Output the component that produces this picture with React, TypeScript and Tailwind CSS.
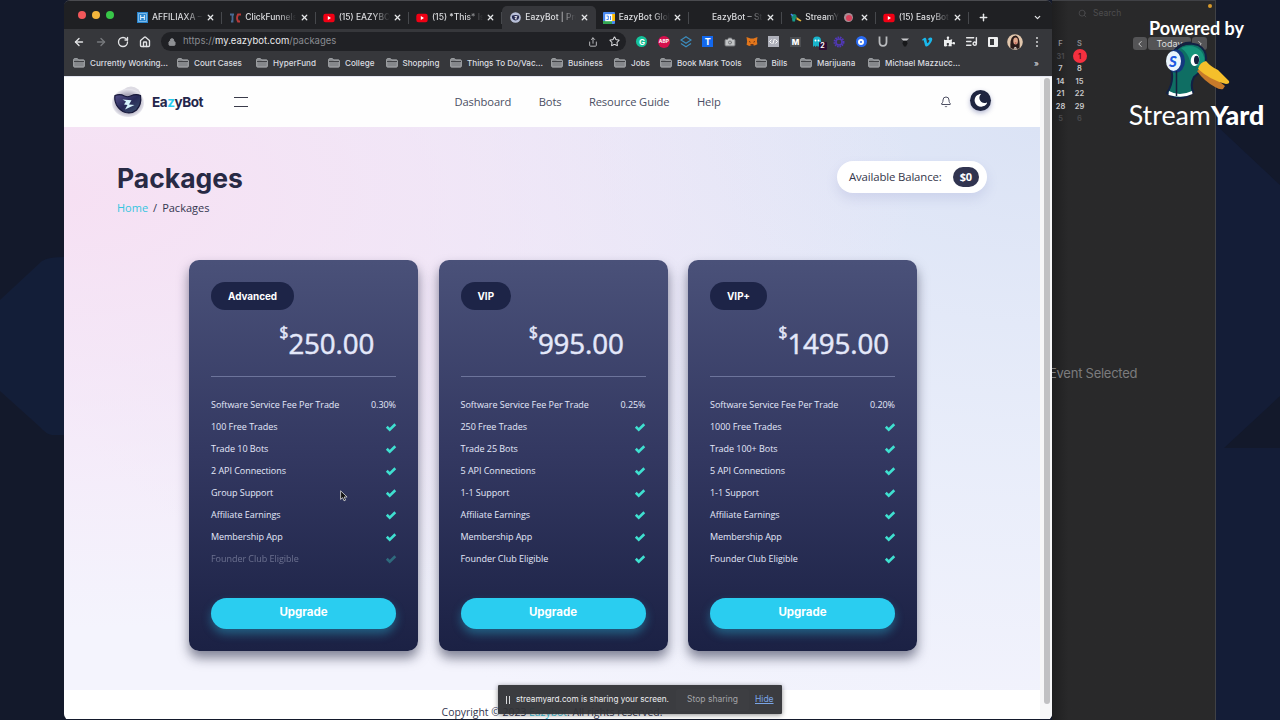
import type { ReactNode } from "react";
import {
  ArrowLeft,
  ArrowRight,
  Bell,
  Camera,
  ChevronDown,
  ChevronLeft,
  ChevronRight,
  House,
  ListMusic,
  Lock,
  Plus,
  RotateCw,
  Search,
  Share,
  Star,
  X,
} from "lucide-react";
import { FaMoon, FaPuzzlePiece, FaVimeoV } from "react-icons/fa";

interface Tab {
  title: string;
  icon?: ReactNode;
  active?: boolean;
  recording?: boolean;
}

interface Bookmark {
  label: string;
  width: string;
}

interface Plan {
  name: string;
  price: string;
  fee: string;
  features: string[];
  lastDisabled?: boolean;
}

function YouTubeIcon() {
  return (
    <svg viewBox="0 0 12 10" className="h-[10px] w-3">
      <rect x="0.3" y="0.8" width="11.4" height="8.4" rx="2.2" fill="#f00014" />
      <path d="M4.8 3.1v3.8L8 5z" fill="#fff" />
    </svg>
  );
}

function BotIcon() {
  return (
    <svg viewBox="0 0 12 12" className="size-[11px]">
      <circle cx="6" cy="6" r="5.8" fill="#b9c0d8" />
      <path d="M2 4.2q4-1.6 8 0q.3 4.8-4 5q-4.2-.3-4-5z" fill="#262a50" />
      <path d="M5 5h2.5L5.5 7.5h2" stroke="#fff" fill="none" />
    </svg>
  );
}

function FolderIcon() {
  return (
    <svg viewBox="0 0 12 10" className="h-[10px] w-3 shrink-0">
      <path
        d="M.7 8.3V1.5q0-.8.8-.8h3l1 1.2h5q.8 0 .8.8v5.6q0 .8-.8.8h-9q-.8 0-.8-.8z"
        fill="#85878b"
        stroke="#b6b8bb"
        strokeWidth="0.9"
      />
      <path d="M1 3.5h10" stroke="#3a3b40" strokeWidth="0.9" />
    </svg>
  );
}

function CheckIcon() {
  return (
    <svg viewBox="0 0 12 10" className="mt-px -mr-[0.5px] h-[10px] w-3" fill="none">
      <path d="M1.8 4.8l2.9 2.8 5.6-5.4" stroke="#3fe0d0" strokeWidth="2.6" />
    </svg>
  );
}

const tabs: Tab[] = [
  {
    title: "AFFILIAXA – D",
    icon: (
      <svg viewBox="0 0 11 11" className="size-[11px]">
        <rect width="11" height="11" fill="#2a86cf" />
        <path d="M1.5 1.5h8v8h-8z" stroke="#9fcdf0" fill="none" strokeWidth="0.7" />
        <path d="M3.7 3v5M7.3 3v5M3.7 5.5h3.6" stroke="#e6f2fb" fill="none" />
      </svg>
    ),
  },
  {
    title: "ClickFunnels",
    icon: (
      <svg viewBox="0 0 11 10" className="h-[10px] w-[11px]">
        <path d="M0 1.5h4M2.5 1.5v7H1" stroke="#4a6a92" strokeWidth="1.8" fill="none" />
        <path d="M11 1.5H8q-2 3.5 0 7h2" stroke="#b93a3a" strokeWidth="1.8" fill="none" />
      </svg>
    ),
  },
  { title: "(15) EAZYBOT", icon: <YouTubeIcon /> },
  { title: "(15) *This* Is", icon: <YouTubeIcon /> },
  { title: "EazyBot | Pro", icon: <BotIcon />, active: true },
  {
    title: "EazyBot Glob",
    icon: (
      <svg viewBox="0 0 12 12" className="size-[12px]">
        <rect width="12" height="12" rx="1" fill="#4a8af0" />
        <path d="M0 9h9v3H1q-1 0-1-1z" fill="#34a853" />
        <path d="M9 2h3v7H9z" fill="#fbbc04" />
        <rect x="2.2" y="2.2" width="7" height="7" fill="#fff" />
        <path d="M3.5 4h1.8v3.5H3.5M7.5 4v4" stroke="#4285f4" fill="none" />
      </svg>
    ),
  },
  { title: "EazyBot – Sta" },
  {
    title: "StreamYard",
    recording: true,
    icon: (
      <svg viewBox="0 0 12 10" className="h-[10px] w-3">
        <circle cx="4" cy="3.5" r="2.6" fill="#128a72" />
        <path d="M2 5.5h3.5l-.5 3H2.5z" fill="#149a8c" />
        <path d="M6.5 4l5 3.5-1 1-4-2z" fill="#e5b63a" />
        <path d="M1 1l2 2" stroke="#4b86f0" strokeWidth="1.5" />
      </svg>
    ),
  },
  { title: "(15) EasyBot", icon: <YouTubeIcon /> },
];

const bookmarks: Bookmark[] = [
  { label: "Currently Working...", width: "w-[104px]" },
  { label: "Court Cases", width: "w-[79px]" },
  { label: "HyperFund", width: "w-[72px]" },
  { label: "College", width: "w-[57.5px]" },
  { label: "Shopping", width: "w-[64.5px]" },
  { label: "Things To Do/Vac...", width: "w-[101px]" },
  { label: "Business", width: "w-[63px]" },
  { label: "Jobs", width: "w-[46px]" },
  { label: "Book Mark Tools", width: "w-[94.5px]" },
  { label: "Bills", width: "w-[45.5px]" },
  { label: "Marijuana", width: "w-[68px]" },
  { label: "Michael Mazzucc...", width: "w-[90px]" },
];

const plans: Plan[] = [
  {
    name: "Advanced",
    price: "250.00",
    fee: "0.30%",
    features: [
      "100 Free Trades",
      "Trade 10 Bots",
      "2 API Connections",
      "Group Support",
      "Affiliate Earnings",
      "Membership App",
      "Founder Club Eligible",
    ],
    lastDisabled: true,
  },
  {
    name: "VIP",
    price: "995.00",
    fee: "0.25%",
    features: [
      "250 Free Trades",
      "Trade 25 Bots",
      "5 API Connections",
      "1-1 Support",
      "Affiliate Earnings",
      "Membership App",
      "Founder Club Eligible",
    ],
  },
  {
    name: "VIP+",
    price: "1495.00",
    fee: "0.20%",
    features: [
      "1000 Free Trades",
      "Trade 100+ Bots",
      "5 API Connections",
      "1-1 Support",
      "Affiliate Earnings",
      "Membership App",
      "Founder Club Eligible",
    ],
  },
];

const calendarRows = [
  ["31", "1"],
  ["7", "8"],
  ["14", "15"],
  ["21", "22"],
  ["28", "29"],
  ["5", "6"],
];

function TabStrip() {
  return (
    <div className="flex h-[28px] bg-[#1f2023] pt-[5px]">
      <div className="flex w-[65px] shrink-0 items-center gap-[6px] pb-[5px] pl-[14px]">
        <span className="size-2 rounded-full bg-[#f2575a]" />
        <span className="size-2 rounded-full bg-[#f3b53c]" />
        <span className="size-2 rounded-full bg-[#38c648]" />
      </div>
      {tabs.map((tab) => (
        <div
          key={tab.title}
          className={`flex w-[93.33px] shrink-0 items-center rounded-t-[5px] pr-[7px] pl-[7.5px] ${
            tab.active ? "bg-[#36373b]" : ""
          }`}
        >
          <span className="flex w-[15.5px] shrink-0">{tab.icon}</span>
          <span
            className={`overflow-hidden text-[8.5px] font-medium whitespace-nowrap text-[#dcdde0] [mask-image:linear-gradient(to_right,black_65%,transparent)] ${
              tab.recording ? "w-[34px]" : "w-[51px]"
            }`}
          >
            {tab.title}
          </span>
          {tab.recording && (
            <span className="ml-[5px] flex size-[9px] shrink-0 items-center justify-center rounded-full bg-[#a98d94]">
              <span className="size-[6px] rounded-full bg-[#d9405a]" />
            </span>
          )}
          <X className="ml-auto size-[9px] shrink-0 text-[#e6e7e9]" strokeWidth={3.4} />
          {!tab.active && <span className="relative left-[7px] -ml-px h-3 w-px shrink-0 bg-[#46484c]" />}
        </div>
      ))}
      <Plus className="mt-[6px] ml-[9px] size-[11px] text-[#e6e7e9]" strokeWidth={3.2} />
      <ChevronDown className="mt-[7px] mr-[10px] ml-auto size-[9px] text-[#e6e7e9]" strokeWidth={3.2} />
    </div>
  );
}

function Extensions() {
  return (
    <div className="flex h-5 items-center">
      <div className="flex w-[21.95px] justify-center">
        <span className="flex size-[11px] items-center justify-center rounded-full bg-[#15c39a] text-[8px] font-bold text-white">
          G
        </span>
      </div>
      <div className="flex w-[21.95px] justify-center">
        <span className="flex size-[12px] items-center justify-center rounded-full bg-[#d6104c] text-[5px] font-bold text-white">
          ABP
        </span>
      </div>
      <div className="flex w-[21.95px] justify-center">
        <svg viewBox="0 0 12 12" className="size-3" fill="none" stroke="#3c8dbe" strokeWidth="1.2">
          <path d="M6 .8l5 3.2-5 3.2-5-3.2zM1 7.6l5 3.2 5-3.2" />
        </svg>
      </div>
      <div className="flex w-[21.95px] justify-center">
        <span className="flex size-[11px] items-center justify-center bg-[#1268ee] text-[9px] font-bold text-white">
          T
        </span>
      </div>
      <div className="flex w-[21.95px] justify-center">
        <Camera className="size-[12px] fill-[#c2c4c6] text-[#75777b]" strokeWidth={2} />
      </div>
      <div className="flex w-[21.95px] justify-center">
        <svg viewBox="0 0 12 11" className="h-[11px] w-3">
          <path d="M.5 1l4 1.5h3l4-1.5-.6 4 .5 3.2-2.6 1.3L6 9l-2.8 1L.6 8.7l.5-3.2z" fill="#e2761b" />
          <path d="M3 5.5l1.5.7M9 5.5l-1.5.7M4.5 8.5h3" stroke="#6b3417" />
        </svg>
      </div>
      <div className="flex w-[21.95px] justify-center">
        <svg viewBox="0 0 11 11" className="size-[11px]">
          <rect width="11" height="11" fill="#aeb0ba" />
          <path d="M3.5 3.5l-2 2 2 2M7.5 3.5l2 2-2 2M6.3 3l-1.5 5" stroke="#fff" fill="none" />
        </svg>
      </div>
      <div className="flex w-[21.95px] justify-center">
        <span className="flex h-[10px] w-[11px] items-center justify-center bg-[#4b4d51] text-[8px] leading-none font-extrabold text-white">
          M
        </span>
      </div>
      <div className="relative flex w-[21.95px] justify-center">
        <svg viewBox="0 0 10 11" className="h-[11px] w-[10px]">
          <path d="M1 11V4.5Q1 .5 5 .5t4 4V11L7.5 9.5 6 11 5 9.5 3.5 11 2.5 9.5z" fill="#18b4cc" />
          <circle cx="3.5" cy="4.5" r="1" fill="#fff" />
          <circle cx="6.5" cy="4.5" r="1" fill="#fff" />
        </svg>
        <span className="absolute top-[6px] left-[12px] flex h-[8px] w-[8px] items-center justify-center rounded-[1px] bg-[#2d0b33] text-[7px] font-bold text-white">
          2
        </span>
      </div>
      <div className="flex w-[21.95px] justify-center">
        <svg viewBox="0 0 12 12" className="size-3" fill="none" stroke="#5138b8">
          <circle cx="6" cy="6" r="4.5" strokeWidth="2" strokeDasharray="1.6 .8" />
          <circle cx="6" cy="6" r="3" strokeWidth="1.5" />
        </svg>
      </div>
      <div className="flex w-[21.95px] justify-center">
        <span className="flex size-[11px] items-center justify-center rounded-full bg-[#2a6bf2]">
          <span className="size-[6px] rounded-full border-2 border-white" />
        </span>
      </div>
      <div className="flex w-[21.95px] justify-center">
        <svg viewBox="0 0 10 11" className="h-[11px] w-[10px]" fill="none" stroke="#b9bbbe" strokeWidth="1.8">
          <path d="M1.5.5V6q0 3.800 3.500 3.800T8.500 6V.5" />
        </svg>
      </div>
      <div className="flex w-[21.95px] justify-center">
        <svg viewBox="0 0 10 12" className="h-3 w-[10px]">
          <path d="M1 2.500h8L6.800 4.500H3.200z" fill="#c9cacc" />
          <path d="M3 5h4l.5 2.500L6 10.500H4L2.500 7.500z" fill="#17181a" />
        </svg>
      </div>
      <div className="flex w-[21.95px] justify-center">
        <FaVimeoV className="size-[12px] text-[#1ab7ea]" />
      </div>
      <div className="flex w-[21.95px] justify-center">
        <FaPuzzlePiece className="size-[11px] text-[#eeeff0]" />
      </div>
      <div className="flex w-[21.95px] justify-center">
        <ListMusic className="size-[13px] text-[#e6e7e9]" strokeWidth={2.6} />
      </div>
      <div className="flex w-[21.95px] justify-center">
        <span className="size-[10px] rounded-[1px] border-2 border-r-4 border-[#eeeff0]" />
      </div>
      <div className="flex w-[21.95px] justify-center">
        <svg viewBox="0 0 16 16" className="size-4">
          <circle cx="8" cy="8" r="7.8" fill="#e2c7ad" />
          <path d="M3.5 14Q2.5 2 8.5 1.5 13.5 2.5 12.5 14l-2 1H6z" fill="#2a1a19" />
          <ellipse cx="8.6" cy="7" rx="2.3" ry="3.5" fill="#e0a78b" />
          <path d="M6.5 14.8l1.5-2 2.5 1.8z" fill="#e9dfd9" />
          <path d="M7.8 9h1.6" stroke="#b3303b" />
        </svg>
      </div>
      <div className="flex w-[21.95px] flex-col items-center gap-[2px]">
        <span className="size-[2px] rounded-full bg-[#d6d7d9]" />
        <span className="size-[2px] rounded-full bg-[#d6d7d9]" />
        <span className="size-[2px] rounded-full bg-[#d6d7d9]" />
      </div>
    </div>
  );
}

function BrowserToolbar() {
  return (
    <div className="flex h-[26px] items-center bg-[#36373b] pb-px pl-[9px]">
      <div className="flex w-[88px] gap-[10px] text-[#e2e3e5]">
        <ArrowLeft className="size-3" strokeWidth={2.7} />
        <ArrowRight className="size-3 text-[#77797d]" strokeWidth={2.7} />
        <RotateCw className="size-3" strokeWidth={2.7} />
        <House className="size-3" strokeWidth={2.7} />
      </div>
      <div className="flex h-[19px] w-[465px] items-center rounded-full bg-[#202125] pr-[6px] pl-[7px]">
        <Lock className="size-[8px] fill-[#8f9195] text-[#8f9195]" strokeWidth={3} />
        <span className="ml-[7px] text-[9.5px] text-[#8a8c91]">
          https://<span className="text-[#e9eaec]">my.eazybot.com</span>/packages
        </span>
        <Share className="ml-auto size-[10px] text-[#c3c4c7]" strokeWidth={2.2} />
        <Star className="ml-[11px] size-[11px] text-[#dcdde0]" strokeWidth={2.2} />
      </div>
      <div className="ml-[5px]">
        <Extensions />
      </div>
    </div>
  );
}

function BookmarkBar() {
  return (
    <div className="flex h-[21px] items-center bg-[#36373b] pb-[5px] pl-[9px] text-[8.1px] font-medium text-[#dcdde0]">
      {bookmarks.map((bookmark) => (
        <div
          key={bookmark.label}
          className={`flex shrink-0 items-center gap-[5px] whitespace-nowrap ${bookmark.width}`}
        >
          <FolderIcon />
          {bookmark.label}
        </div>
      ))}
      <span className="mr-[13px] ml-auto">»</span>
    </div>
  );
}

function SiteHeader() {
  return (
    <header className="flex h-[50px] shrink-0 items-center bg-[#fefefe] pl-[47px]">
      <svg viewBox="0 0 34 34" className="size-[34px]">
        <defs>
          <radialGradient id="halo">
            <stop offset="0.6" stopColor="#a9a6b8" />
            <stop offset="1" stopColor="#e8e7ee" />
          </radialGradient>
          <linearGradient id="mask" x1="0" y1="0" x2="1" y2="1">
            <stop offset="0" stopColor="#55508a" />
            <stop offset="0.5" stopColor="#272a57" />
            <stop offset="1" stopColor="#3c5570" />
          </linearGradient>
        </defs>
        <ellipse cx="20" cy="11" rx="10" ry="9.5" fill="#dddbe3" />
        <ellipse cx="17" cy="18" rx="16" ry="14" fill="url(#halo)" />
        <path
          d="M4 10.5Q9 8.5 13.5 11q3 1.5 6 0Q25 8.5 29.5 10.5 31 19 25.5 25q-4.5 4-11 2.5Q9 26 5.5 20 3 14.5 4 10.5z"
          fill="url(#mask)"
          stroke="#17183a"
          strokeWidth="1.2"
        />
        <path d="M11.5 14.5l9 .8-2.5 4.2 5.500.5-9.500 4.500 2.500-4.500-3.500-.5 2-3z" fill="#d5f2fb" />
      </svg>
      <span className="ml-[7px] w-[52px] font-[Inter,sans-serif] text-[13.5px] font-bold tracking-[-0.45px] text-[#24264b]">
        Ea<span className="text-[#29cdee]">z</span>yBot
      </span>
      <div className="ml-[30px] flex w-[14px] flex-col gap-2">
        <span className="h-px bg-[#3a3b4a]" />
        <span className="h-px bg-[#3a3b4a]" />
      </div>
      <nav className="ml-[206.5px] flex gap-[27.4px] text-[11.2px] tracking-[-0.11px] text-[#4b4e63]">
        <span>Dashboard</span>
        <span>Bots</span>
        <span>Resource Guide</span>
        <span>Help</span>
      </nav>
      <Bell className="ml-auto size-3 text-[#44475b]" strokeWidth={1.9} />
      <span className="mr-[49px] mb-[3px] ml-[18px] flex size-[21px] items-center justify-center rounded-full bg-[#1f2540] shadow-[0_2px_5px_rgba(60,70,140,0.4)]">
        <FaMoon className="size-[13px] -rotate-[15deg] text-white" />
      </span>
    </header>
  );
}

function PlanCard({ plan }: { plan: Plan }) {
  return (
    <article className="flex h-[391px] w-[229px] flex-col rounded-[10px] bg-linear-to-b from-[#4a5179] via-[#333861] to-[#1b2144] px-[22px] pt-[22px] text-[#e4e8fa] shadow-[0_7px_12px_rgba(35,38,65,0.55)]">
      <span className="flex h-[28px] items-center self-start rounded-full bg-[#1d2447] px-[17px] font-[Inter,sans-serif] text-[9.9px] font-bold text-white">
        {plan.name}
      </span>
      <div className="mt-[11px] flex h-[44px] items-start pl-[68.5px] [-webkit-text-stroke:0.5px_#e4e8fa]">
        <span className="mt-px text-[15.5px] leading-[20px]">$</span>
        <span className="text-[27.7px] leading-[44px] tracking-[-0.1px]">{plan.price}</span>
      </div>
      <div className="mt-[11px] h-px bg-[#6d749b]" />
      <ul className="mt-[17px] text-[9px] tracking-[-0.04px]">
        <li className="flex h-[21.95px] items-center justify-between">
          <span>Software Service Fee Per Trade</span>
          <span>{plan.fee}</span>
        </li>
        {plan.features.map((feature, index) => (
          <li
            key={feature}
            className={`flex h-[21.95px] items-center justify-between ${
              plan.lastDisabled && index === plan.features.length - 1 ? "opacity-35" : ""
            }`}
          >
            <span>{feature}</span>
            <CheckIcon />
          </li>
        ))}
      </ul>
      <button className="mt-[28px] h-[31px] rounded-full bg-[#2acdf0] font-[Inter,sans-serif] text-[11.5px] font-bold text-white shadow-[0_5px_10px_rgba(42,205,240,0.35)]">
        Upgrade
      </button>
    </article>
  );
}

function PackagesPage() {
  return (
    <div className="flex h-[643px] border-t border-[#e3e5f0] bg-white">
      <div className="flex w-[976px] flex-col font-['Open_Sans',sans-serif]">
        <SiteHeader />
        <main className="h-[563px] shrink-0 bg-[#f4f4fd] bg-[radial-gradient(ellipse_at_0%_12%,#f6e0f3_0%,#f5e2f599_30%,transparent_62%),radial-gradient(ellipse_at_100%_0%,#dbe3f5_0%,#e2e9f8aa_40%,transparent_80%)]">
          <div className="flex h-[133px] justify-between pt-[34px] pr-[53px] pl-[53px]">
            <div>
              <h1 className="font-[Inter,sans-serif] text-[26.5px] leading-[34px] font-bold text-[#282a45]">
                Packages
              </h1>
              <div className="mt-[5px] flex gap-[5px] text-[11px] leading-4 text-[#33364f]">
                <span className="text-[#35c5df]">Home</span>
                <span>/</span>
                <span>Packages</span>
              </div>
            </div>
            <div className="flex h-[32px] w-[150px] items-center justify-between rounded-full bg-white pr-[8px] pl-[12px] text-[11.4px] tracking-[-0.15px] text-[#35374b] shadow-[0_6px_12px_rgba(120,130,190,0.18)]">
              <span className="whitespace-nowrap">Available Balance:</span>
              <span className="flex h-[20px] items-center rounded-full bg-[#313450] px-[7px] text-[11px] font-bold text-white">
                $0
              </span>
            </div>
          </div>
          <div className="flex gap-[20.5px] pl-[125px]">
            {plans.map((plan) => (
              <PlanCard key={plan.name} plan={plan} />
            ))}
          </div>
        </main>
        <footer className="flex h-[30px] items-center justify-center pt-[15px] text-[10.4px] text-[#33364f]">
          Copyright © 2023&nbsp;<span className="text-[#35c5df]">Eazybot</span>.&nbsp;All rights reserved.
        </footer>
      </div>
      <div className="w-[12px] bg-[#f7f7f8] pt-px pl-[4px]">
        <div className="h-[626px] w-[6px] rounded-full bg-[#c1c1c3]" />
      </div>
    </div>
  );
}

function ShareBar() {
  return (
    <div className="absolute top-[685px] left-[498px] flex h-[29px] w-[284px] items-center rounded-[1px] bg-[#303136]/95 pl-[8px] font-[Inter,sans-serif] text-[8.5px] shadow-[0_1px_5px_rgba(0,0,0,0.45)]">
      <span className="h-2 w-[4px] border-x border-[#d9dadc]" />
      <span className="ml-[6px] w-[160px] text-[8.2px] whitespace-nowrap text-[#eeeff1]">
        streamyard.com is sharing your screen.
      </span>
      <span className="flex h-[22px] w-[73px] items-center justify-center rounded-[2px] bg-[#3d3e42] text-[#a3a4a8]">
        Stop sharing
      </span>
      <span className="ml-[6px] text-[#7aa5e6] underline">Hide</span>
    </div>
  );
}

function CalendarWindow() {
  return (
    <aside className="h-full w-[164px] overflow-hidden border-t border-r border-[#404145] bg-[#29292a] bg-linear-to-r from-[#1f1f20] to-[#29292a] to-10% font-[Inter,sans-serif]">
      <div className="flex h-[25px] items-center gap-[6px] pl-[26px] text-[8.5px] text-[#4d4d4f]">
        <Search className="size-[9px]" strokeWidth={2.2} />
        Search
        <span className="mr-[3px] mb-4 ml-auto size-1 rounded-full bg-[#d99a2b]" />
      </div>
      <div className="flex justify-between pt-[11px] pr-[8px]">
        <div className="text-[7.5px] font-semibold text-[#c9c9cb]">
          <div className="flex h-[13px] items-center text-[#8d8d90]">
            <span className="w-[17px] text-center">F</span>
            <span className="w-[21px] text-center">S</span>
          </div>
          {calendarRows.map(([fri, sat], index) => (
            <div
              key={fri}
              className={`flex h-[12.5px] items-center ${index === 5 ? "text-[#4b4b4e]" : ""}`}
            >
              <span className={`w-[17px] text-center ${index === 0 ? "text-[#4b4b4e]" : ""}`}>{fri}</span>
              <span className="flex w-[21px] justify-center">
                {index === 0 ? (
                  <span className="-my-1 flex size-[14px] items-center justify-center rounded-full bg-[#f5303f] text-[#5c0d16]">
                    {sat}
                  </span>
                ) : (
                  sat
                )}
              </span>
            </div>
          ))}
        </div>
        <div className="flex h-[13px] gap-px text-[9px] text-[#dededf]">
          <span className="flex w-[14px] items-center justify-center rounded-[3px] bg-[#545456]">
            <ChevronLeft className="size-[10px]" />
          </span>
          <span className="flex w-[43px] items-center justify-center rounded-[3px] bg-[#545456]">Today</span>
          <span className="flex w-[15px] items-center justify-center rounded-[3px] bg-[#545456]">
            <ChevronRight className="size-[10px]" />
          </span>
        </div>
      </div>
      <p className="mt-[239px] -ml-[3px] text-[13px] tracking-[-0.25px] text-[#7b7b7d]">Event Selected</p>
    </aside>
  );
}

function StreamYardMark() {
  return (
    <div className="absolute top-[17px] left-[1127px] flex w-[139px] flex-col items-center font-[Lato,sans-serif] text-white">
      <span className="text-[18px] leading-[23px] font-bold whitespace-nowrap">Powered by</span>
      <svg viewBox="0 0 68 59" className="h-[59px] w-[68px]">
        {/* neck and head */}
        <path
          d="M9 34Q5 14 15 7q9-6 20-2 9 5 8 15-1 9-12 17-4 7-1 15-6 6-13 6-9 0-13-5 6-9 5-19z"
          fill="#0f6e63"
          stroke="#122044"
          strokeWidth="2"
        />
        <path d="M18 8Q30 3 38 11q5 6 3 15-8 3-14-5-2-8-9-13z" fill="#15947a" />
        <path d="M6 51q10 6 23 0l.5 3q-10 5-24 1z" fill="#fff" />
        {/* beak */}
        <path d="M34 31l5-3 23 18-2 3q-3 1-8-2-11-6-18-16z" fill="#c77a2a" />
        <path d="M35 29q2-7 8-8 5 6 12 9l11 11q1 3-3 3-16-4-28-15z" fill="#f5bf2b" />
        <ellipse cx="32" cy="20" rx="4.2" ry="6" fill="#fff" transform="rotate(10 32 20)" />
        <ellipse cx="33.5" cy="20" rx="2.5" ry="4.2" fill="#14213f" />
        {/* headphones */}
        <path d="M12 11Q17 3 28 3" stroke="#14213f" strokeWidth="3" fill="none" />
        <ellipse cx="13" cy="21" rx="9" ry="11.5" fill="#14387f" />
        <ellipse cx="10.5" cy="21" rx="7.5" ry="10" fill="#e9f4fc" />
        <path d="M13.5 31v25" stroke="#14213f" strokeWidth="1.5" />
        <text x="6" y="26.500" fontSize="15" fontWeight="900" fontStyle="italic" fill="#1d5ae0">
          S
        </text>
      </svg>
      <span className="text-[26.8px] leading-[32px] whitespace-nowrap">
        Stream<span className="font-black">Yard</span>
      </span>
    </div>
  );
}

export default function App() {
  return (
    <div className="relative flex h-[720px] w-[1280px] overflow-hidden bg-[#13192b]">
      <svg viewBox="0 0 64 720" className="h-[720px] w-16 shrink-0">
        <path d="M0 300L42 261Q48 257 64 257V435H52Q46 434 40 427L0 391z" fill="#131e38" />
      </svg>
      <div className="w-[988px] shrink-0 overflow-hidden rounded-[6px] border-t border-[#4a4b4f] font-[Inter,sans-serif]">
        <TabStrip />
        <BrowserToolbar />
        <BookmarkBar />
        <PackagesPage />
      </div>
      <CalendarWindow />
      <svg viewBox="0 0 64 720" className="h-[720px] w-16 shrink-0">
        <path d="M0 125L64 185V396L8 448H64V720H0z" fill="#141d37" />
      </svg>
      <ShareBar />
      <StreamYardMark />
      {/* mouse pointer */}
      <svg viewBox="0 0 8 12" className="absolute top-[490px] left-[340px] h-3 w-2">
        <path d="M.6.8v8.6l2-1.8 1.4 3.2 1.6-.7L4.2 7h2.9z" fill="#111" stroke="#ddd" strokeWidth="0.8" />
      </svg>
    </div>
  );
}
